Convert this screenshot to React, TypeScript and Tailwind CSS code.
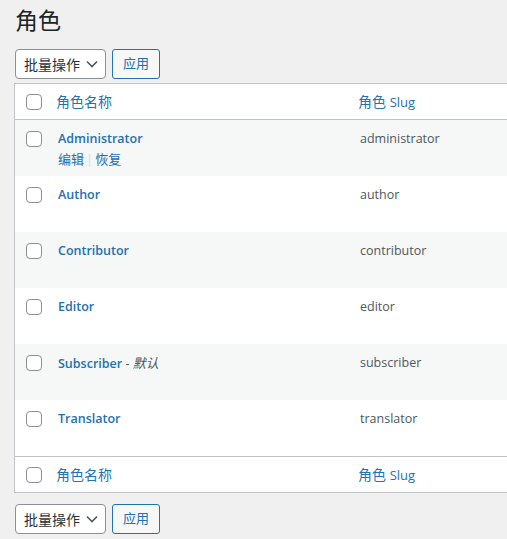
import React from "react";

const FONT = '"Open Sans", "Noto Sans CJK SC", sans-serif';

function Checkbox() {
  return (
    <span className="block w-4 h-4 rounded-[4px] border border-[#8c8f94] bg-white shrink-0" />
  );
}

function Bulk() {
  return (
    <div className="flex gap-[6px] items-center">
      <div className="h-[30px] w-[91px] rounded-[4px] border border-[#8c8f94] bg-white flex items-center pl-[8px] pr-[7px] justify-between text-[14px] text-[#2c3338]">
        <span>批量操作</span>
        <svg width="12" height="8" viewBox="0 0 12 8">
          <path d="M1 1.5 L6 6.5 L11 1.5" fill="none" stroke="#50575e" strokeWidth="1.6" />
        </svg>
      </div>
      <div className="h-[30px] w-[48px] rounded-[3px] border border-[#2271b1] bg-[#f6f7f7] flex items-center justify-center text-[13px] text-[#2271b1]">
        应用
      </div>
    </div>
  );
}

const rows = [
  { name: "Administrator", slug: "administrator", actions: true },
  { name: "Author", slug: "author" },
  { name: "Contributor", slug: "contributor" },
  { name: "Editor", slug: "editor" },
  { name: "Subscriber", slug: "subscriber", def: true },
  { name: "Translator", slug: "translator" },
];

function HeaderRow({ top }: { top: boolean }) {
  return (
    <div
      className={
        "flex h-[36px] items-center bg-white " +
        (top ? "border-b border-[#c3c4c7]" : "border-t border-[#c3c4c7]")
      }
    >
      <div className="w-[41px] pl-[11px]">
        <Checkbox />
      </div>
      <div className="w-[302px] text-[#2271b1] text-[14px]">角色名称</div>
      <div className="text-[#2271b1] text-[14px]">
        角色 <span className="text-[13px]">Slug</span>
      </div>
    </div>
  );
}

export default function App() {
  return (
    <div
      className="w-[507px] h-[539px] bg-[#f0f0f1] overflow-hidden"
      style={{ fontFamily: FONT }}
    >
      <div className="pl-[15px]">
        <h1 className="text-[23px] leading-[29px] text-[#1d2327] pt-[6px] pb-[4px] font-normal">角色</h1>
        <div className="pt-[10px]">
          <Bulk />
        </div>
        <div className="mt-[4px] -ml-[1px] w-[520px] border border-[#c3c4c7] bg-white">
          <HeaderRow top />
          {rows.map((r, i) => (
            <div
              key={r.name}
              className={"flex h-[56px] items-start pt-[8px] " + (i % 2 === 0 ? "bg-[#f6f7f7]" : "bg-white")}
            >
              <div className="w-[43px] pl-[11px] pt-[3px]">
                <Checkbox />
              </div>
              <div className="w-[302px] pt-[1px] text-[12.5px] leading-[20px]">
                <div>
                  <span className="text-[#2271b1] font-semibold">{r.name}</span>
                  {r.def && (
                    <span className="text-[#50575e]">
                      {" "}- <span className="italic text-[13px]">默认</span>
                    </span>
                  )}
                </div>
                {r.actions && (
                  <div className="text-[13px] leading-[20px]">
                    <span className="text-[#2271b1]">编辑</span>
                    <span className="text-[#dcdcde] px-[2px]">|</span>
                    <span className="text-[#2271b1]">恢复</span>
                  </div>
                )}
              </div>
              <div className="pt-[1px] text-[12.5px] leading-[20px] text-[#50575e]">{r.slug}</div>
            </div>
          ))}
          <HeaderRow top={false} />
        </div>
        <div className="pt-[11px]">
          <Bulk />
        </div>
      </div>
    </div>
  );
}
